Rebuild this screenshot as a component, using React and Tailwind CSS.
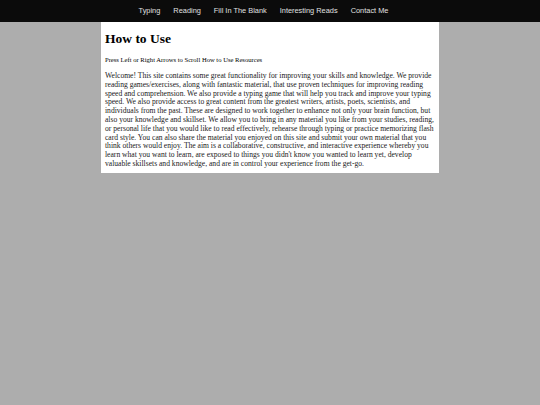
const LINKS = ["Typing", "Reading", "Fill In The Blank", "Interesting Reads", "Contact Me"];

export default function App() {
  return (
    <div className="min-h-[405px] bg-[#adadad] flex flex-col">
      <nav className="h-[22px] bg-[#0b0b0b] flex items-center justify-center gap-[13px] pr-[13px] font-['Liberation_Sans',Arial,sans-serif] text-[7.4px] text-[#e0e0e0]">
        {LINKS.map((l) => (
          <a key={l} href="#" className="leading-none">
            {l}
          </a>
        ))}
      </nav>
      <main className="mx-auto w-[338px] bg-white pl-[4px] pr-[3px] pb-[4px] font-['Liberation_Serif','Times_New_Roman',serif] text-black">
        <h1 className="mt-[9px] mb-[9px] text-[13.5px] font-bold leading-[16px]">How to Use</h1>
        <p className="text-[6.6px] leading-[8px] mb-[8px]">
          Press Left or Right Arrows to Scroll How to Use Resources
        </p>
        <p className="text-[7.6px] leading-[8.8px] text-[#1a1a1a]">
          Welcome! This site contains some great functionality for improving your skills and knowledge. We provide
          reading games/exercises, along with fantastic material, that use proven techniques for improving reading
          speed and comprehension. We also provide a typing game that will help you track and improve your typing
          speed. We also provide access to great content from the greatest writers, artists, poets, scientists, and
          individuals from the past. These are designed to work together to enhance not only your brain function, but
          also your knowledge and skillset. We allow you to bring in any material you like from your studies, reading,
          or personal life that you would like to read effectively, rehearse through typing or practice memorizing flash
          card style. You can also share the material you enjoyed on this site and submit your own material that you
          think others would enjoy. The aim is a collaborative, constructive, and interactive experience whereby you
          learn what you want to learn, are exposed to things you didn't know you wanted to learn yet, develop
          valuable skillsets and knowledge, and are in control your experience from the get-go.
        </p>
      </main>
    </div>
  );
}
